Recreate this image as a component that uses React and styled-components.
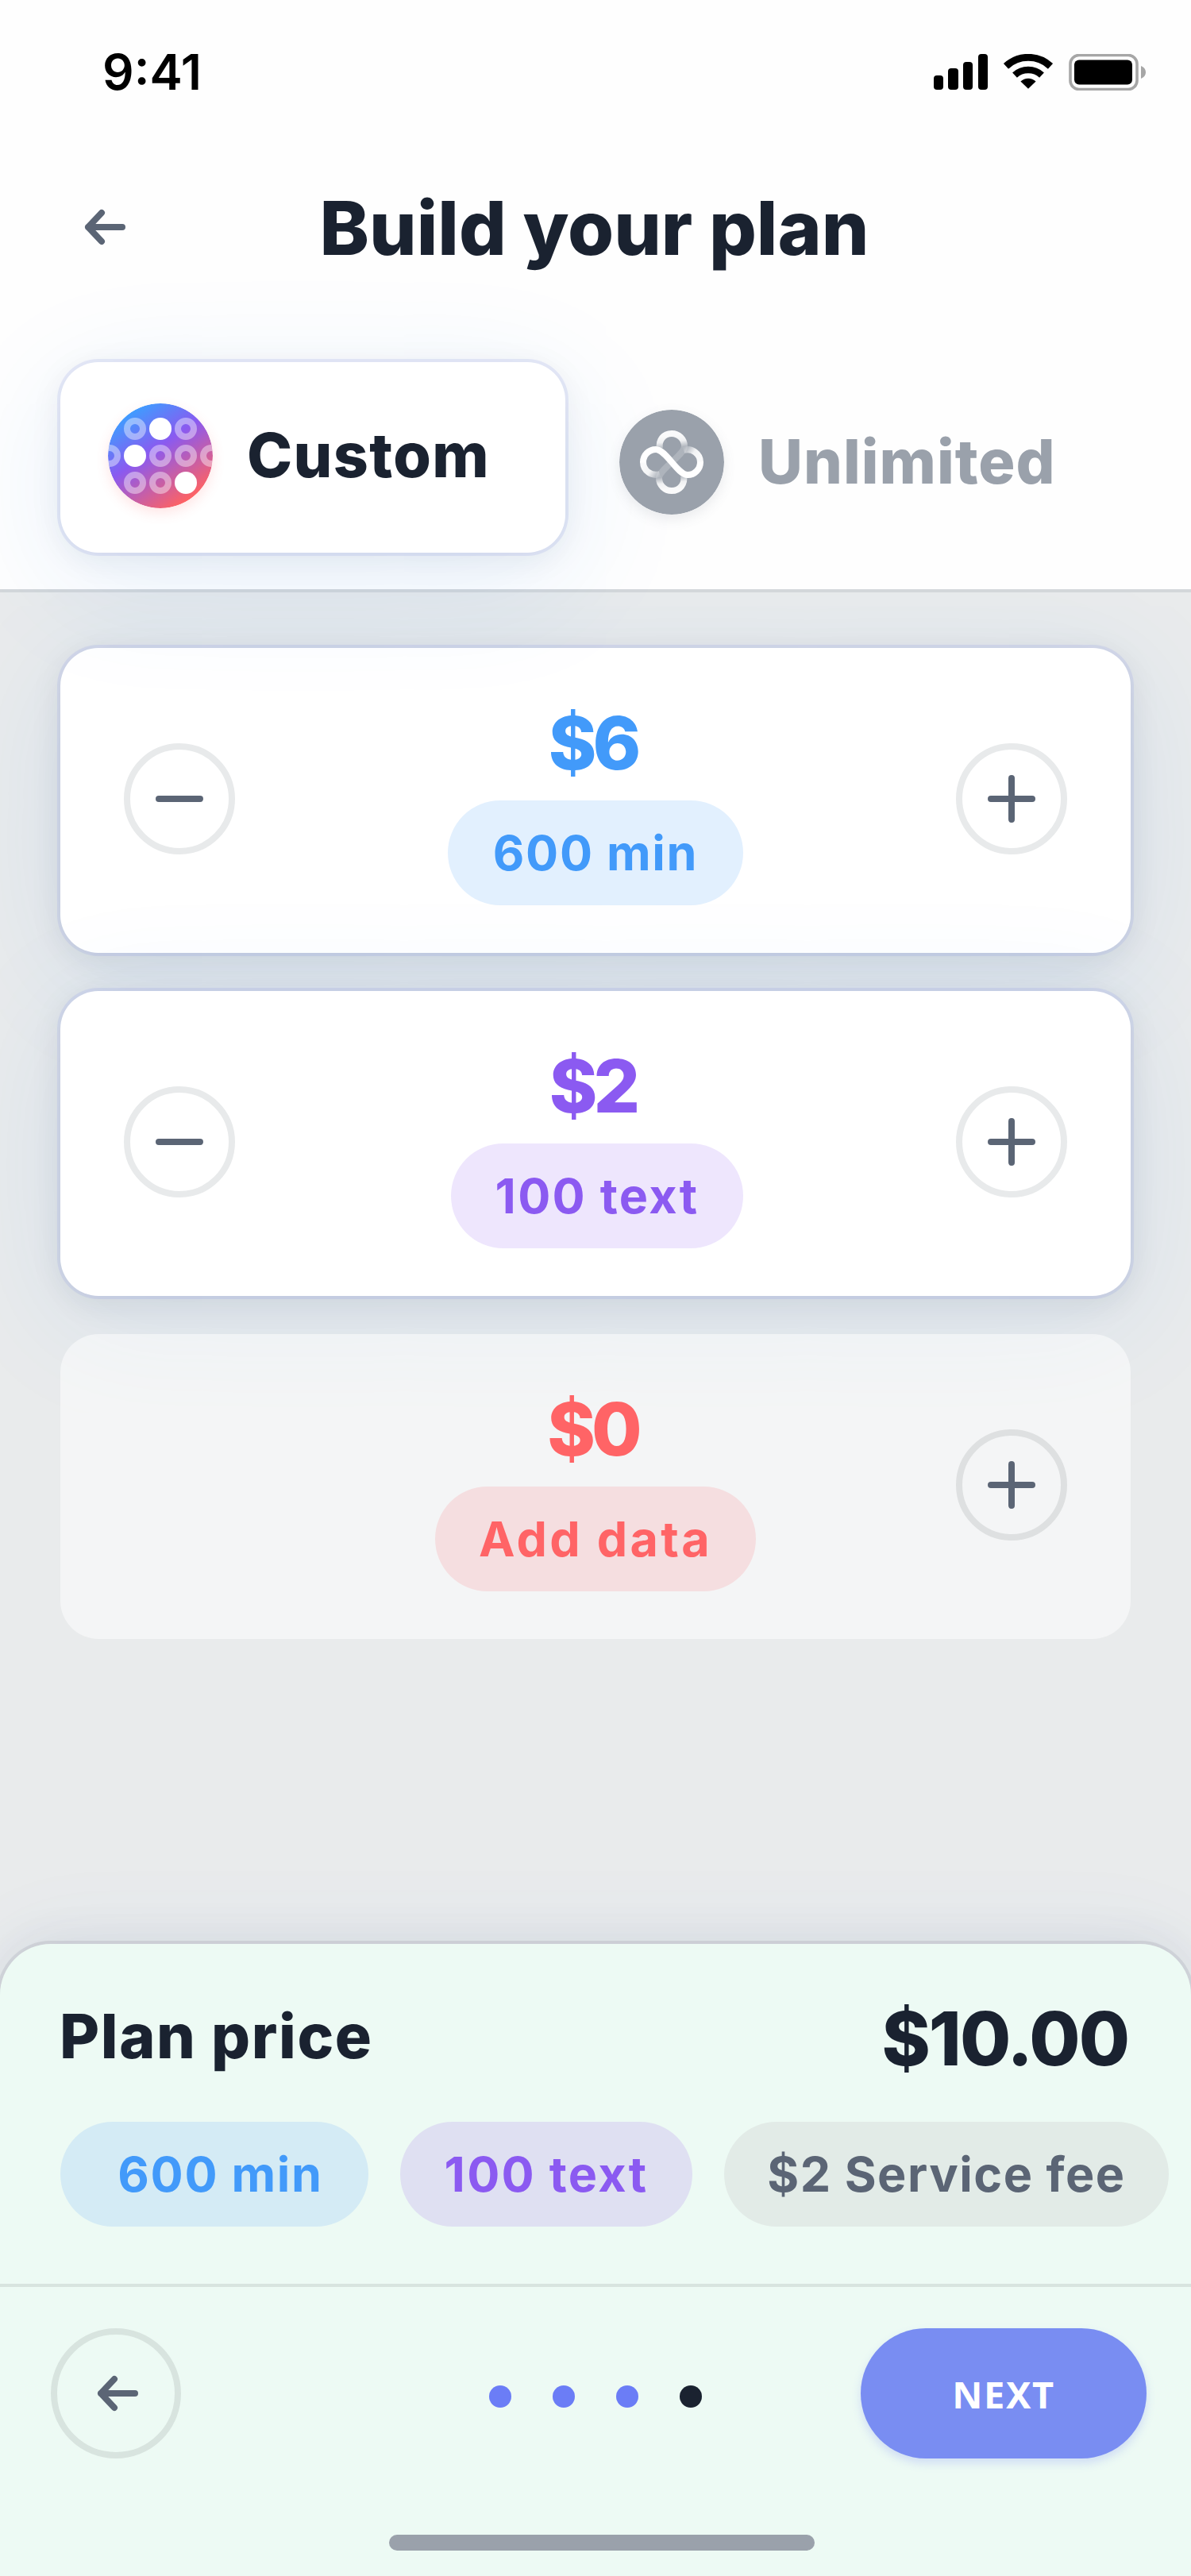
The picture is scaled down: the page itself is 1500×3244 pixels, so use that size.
import React from "react";
import styled, { createGlobalStyle } from "styled-components";

const GlobalStyle = createGlobalStyle`
  * { box-sizing: border-box; }
  html, body { margin: 0; padding: 0; background: #e9ebec; }
  button { font: inherit; color: inherit; border: 0; background: none; padding: 0; margin: 0; }
`;

const ink = "#1a2230";
const slate = "#5b6575";
const display = `Inter, "Liberation Sans", sans-serif`;

const Screen = styled.div`
  display: flex;
  flex-direction: column;
  width: 1500px;
  height: 3244px;
  overflow: hidden;
  background: #e9ebec;
  font-family: ${display};
  color: ${ink};
`;

const Header = styled.header`
  position: relative;
  z-index: 1;
  height: 746px;
  background: #fefefe;
  border-bottom: 4px solid #d3d7da;
`;

const StatusBar = styled.div`
  display: flex;
  align-items: center;
  justify-content: space-between;
  height: 180px;
  padding: 2px 56px 0 129px;
`;

const Clock = styled.span`
  font-weight: 600;
  font-size: 62px;
  line-height: 72px;
  color: #000;
`;

const TitleBar = styled.div`
  display: grid;
  grid-template-columns: 132px 1fr 132px;
  align-items: center;
  height: 212px;
  padding: 0 66px;
`;

const BackLink = styled.button`
  display: flex;
  align-items: center;
  justify-content: center;
  height: 100px;
`;

const Title = styled.h1`
  margin: 2px 0 0;
  padding-right: 3px;
  text-align: center;
  font-weight: 800;
  font-size: 94px;
  line-height: 120px;
`;

const Tabs = styled.div`
  display: flex;
  align-items: flex-start;
  gap: 8px;
  padding: 64px 76px 0;
`;

const Tab = styled.button`
  display: flex;
  align-items: center;
  gap: 43px;
  height: 240px;
  width: ${(p) => (p.$active ? 636 : 640)}px;
  padding: ${(p) => (p.$active ? "0 0 4px 60px" : "12px 0 0 60px")};
  border-radius: 48px;
  color: ${(p) => (p.$active ? ink : "#9aa1ab")};
  background: ${(p) => (p.$active ? "#fff" : "transparent")};
  box-shadow: ${(p) =>
    p.$active
      ? `0 0 0 4px rgba(110, 125, 220, 0.14),
         0 8px 40px rgba(26, 34, 48, 0.08),
         0 36px 160px rgba(40, 130, 240, 0.11)`
      : "none"};
`;

const TabLabel = styled.span`
  margin-top: -3px;
  font-weight: 800;
  font-size: 77px;
  line-height: 100px;
  letter-spacing: ${(p) => p.$spacing}px;
`;

const TabIcon = styled.svg`
  flex: none;
  width: 132px;
  height: 132px;
  border-radius: 50%;
  box-shadow: 0 6px 16px ${(p) => p.$glow};
`;

const Plans = styled.main`
  flex: 1;
  display: flex;
  flex-direction: column;
  gap: 48px;
  padding: 70px 76px 0;
`;

const PlanCard = styled.section`
  display: grid;
  grid-template-columns: 140px 1fr 140px;
  height: 384px;
  padding: 0 80px;
  border-radius: 48px;
  background: ${(p) => (p.$empty ? "rgba(255,255,255,0.5)" : "#fff")};
  box-shadow: ${(p) =>
    p.$empty
      ? "none"
      : `0 0 0 4px rgba(110, 125, 230, 0.13),
         0 8px 40px rgba(26, 34, 48, 0.09),
         0 28px 160px rgba(40, 130, 240, 0.1)`};
`;

const StepButton = styled.button`
  display: flex;
  align-items: center;
  justify-content: center;
  width: 140px;
  height: 140px;
  margin-top: 120px;
  border: 8px solid ${(p) => (p.$muted ? "#dee0e1" : "#e8eaeb")};
  border-radius: 50%;
  color: ${slate};
`;

const PlanBody = styled.div`
  display: flex;
  flex-direction: column;
  align-items: center;
  padding-top: 60px;
`;

const Amount = styled.div`
  height: 132px;
  padding-right: 7px;
  font-weight: 800;
  font-size: 92px;
  line-height: 119px;
  letter-spacing: -5px;
  color: ${(p) => p.$color};
`;

const Chip = styled.span`
  flex: none;
  display: flex;
  justify-content: center;
  width: ${(p) => p.$width}px;
  height: 132px;
  margin-left: ${(p) => p.$nudge || 0}px;
  padding-left: ${(p) => p.$indent || 0}px;
  border-radius: 66px;
  background: ${(p) => p.$fill};
  color: ${(p) => p.$color};
  font-weight: 700;
  font-size: 61px;
  line-height: 132px;
  letter-spacing: ${(p) => p.$spacing}px;
  white-space: nowrap;
`;

const Sheet = styled.footer`
  position: relative;
  height: 796px;
  background: #edfaf4;
  border-radius: 64px 64px 0 0;
  box-shadow: 0 0 0 4px rgba(40, 48, 70, 0.09), 0 -4px 56px rgba(30, 45, 80, 0.07),
    0 -8px 120px rgba(60, 120, 220, 0.05);
`;

const PriceRow = styled.div`
  display: flex;
  justify-content: space-between;
  height: 224px;
  padding: 60px 79px 0 75px;
`;

const PriceLabel = styled.span`
  font-weight: 800;
  font-size: 77px;
  line-height: 113px;
  letter-spacing: 1.6px;
`;

const PriceTotal = styled.span`
  font-weight: 800;
  font-size: 93px;
  line-height: 119px;
  letter-spacing: -2px;
`;

const ChipRow = styled.div`
  display: flex;
  gap: 40px;
  height: 204px;
  padding-left: 76px;
`;

const NavRow = styled.nav`
  display: flex;
  align-items: flex-start;
  justify-content: space-between;
  height: 316px;
  padding: 52px 56px 0 64px;
  border-top: 4px solid #d8e4df;
`;

const RoundBack = styled.button`
  display: flex;
  align-items: center;
  justify-content: center;
  width: 164px;
  height: 164px;
  border: 8px solid #d8e4df;
  border-radius: 50%;
  padding-left: 4px;
`;

const Dots = styled.div`
  display: flex;
  gap: 52px;
  padding: 72px 0 0 188px;
`;

const Dot = styled.i`
  width: 28px;
  height: 28px;
  border-radius: 50%;
  background: ${(p) => (p.$current ? ink : "#6b7df6")};
`;

const NextButton = styled.button`
  width: 360px;
  height: 164px;
  padding-top: 2px;
  border-radius: 82px;
  background: #798df2;
  box-shadow: 0 6px 12px rgba(107, 125, 246, 0.22);
  color: #fff;
  font: 700 47px/162px "Noto Sans", "Open Sans", sans-serif;
  letter-spacing: 1.6px;
`;

const HomeBar = styled.div`
  width: 536px;
  height: 20px;
  margin: 0 0 0 490px;
  border-radius: 10px;
  background: #9aa1ab;
`;

function StatusIcons() {
  return (
    <svg width="268" height="46" viewBox="0 0 268 46">
      <rect x="0" y="27" width="12" height="18" rx="4" />
      <rect x="18" y="18" width="13" height="27" rx="4" />
      <rect x="37" y="10" width="12" height="35" rx="4" />
      <rect x="56" y="0" width="12" height="45" rx="4" />
      <g transform="translate(119 45)">
        <path d="M0 -1.2 L-9.6 -10.4 A14 14 0 0 1 9.6 -10.4 Z" />
        <path d="M-17 -18.4 A25.2 25.2 0 0 1 17 -18.4" fill="none" stroke="#000" strokeWidth="8.6" />
        <path d="M-28 -29.6 A41 41 0 0 1 28 -29.6" fill="none" stroke="#000" strokeWidth="9" />
      </g>
      <rect x="172" y="1.5" width="84" height="43" rx="11" fill="none" stroke="#a6a6a6" strokeWidth="3.6" />
      <rect x="177" y="7.5" width="73" height="31" rx="6" />
      <path d="M261 15 C269 18 269 28 261 31 Z" fill="#a6a6a6" />
    </svg>
  );
}

function ArrowLeft() {
  return (
    <svg width="54" height="48" viewBox="0 0 54 48" fill="none" stroke={slate} strokeWidth="8" strokeLinecap="round" strokeLinejoin="round">
      <path d="M49 24 H6 M23 6 L6 24 L23 42" />
    </svg>
  );
}

function StepGlyph({ plus }) {
  return (
    <svg width="60" height="60" viewBox="0 0 60 60" fill="none" stroke="currentColor" strokeWidth="8" strokeLinecap="round">
      <path d={plus ? "M4 30 H56 M30 4 V56" : "M4 30 H56"} />
    </svg>
  );
}

const rings = [
  [34, 32], [98, 32],
  [2, 66], [66, 66], [98, 66], [130, 66],
  [34, 100], [66, 100],
];
const solids = [[66, 32], [34, 66], [98, 100]];

function CustomIcon() {
  return (
    <TabIcon viewBox="0 0 132 132" $glow="rgba(255, 96, 96, 0.16)">
      <defs>
        <linearGradient id="spectrum" gradientUnits="userSpaceOnUse" x1="29" y1="11" x2="103" y2="121">
          <stop offset="0" stopColor="#3f9cff" />
          <stop offset="0.42" stopColor="#8a5af0" />
          <stop offset="1" stopColor="#ff6262" />
        </linearGradient>
        <clipPath id="disc"><circle cx="66" cy="66" r="66" /></clipPath>
      </defs>
      <g clipPath="url(#disc)">
        <rect width="132" height="132" fill="url(#spectrum)" />
        {rings.map(([x, y]) => (
          <circle key={`${x}-${y}`} cx={x} cy={y} r="10" fill="none" stroke="#fff" strokeOpacity="0.42" strokeWidth="8" />
        ))}
        {solids.map(([x, y]) => (
          <circle key={`${x}-${y}`} cx={x} cy={y} r="14" fill="#fff" />
        ))}
      </g>
    </TabIcon>
  );
}

function UnlimitedIcon() {
  return (
    <TabIcon viewBox="0 0 132 132" $glow="rgba(90, 101, 117, 0.12)">
      <defs>
        <linearGradient id="upright" gradientUnits="userSpaceOnUse" x1="62" y1="26" x2="70" y2="106">
          <stop offset="0.08" stopColor="#fff" stopOpacity="0.95" />
          <stop offset="0.18" stopColor="#fff" stopOpacity="0.85" />
          <stop offset="0.28" stopColor="#fff" stopOpacity="0.2" />
          <stop offset="0.72" stopColor="#fff" stopOpacity="0.2" />
          <stop offset="0.82" stopColor="#fff" stopOpacity="0.85" />
          <stop offset="0.92" stopColor="#fff" stopOpacity="0.95" />
        </linearGradient>
        <linearGradient id="leftTail" gradientUnits="userSpaceOnUse" x1="32" y1="68" x2="52" y2="82">
          <stop offset="0" stopColor="#fff" stopOpacity="0.95" />
          <stop offset="0.45" stopColor="#fff" stopOpacity="0.88" />
          <stop offset="1" stopColor="#fff" stopOpacity="0.08" />
        </linearGradient>
        <linearGradient id="rightTail" gradientUnits="userSpaceOnUse" x1="100" y1="64" x2="80" y2="50">
          <stop offset="0" stopColor="#fff" stopOpacity="0.95" />
          <stop offset="0.45" stopColor="#fff" stopOpacity="0.88" />
          <stop offset="1" stopColor="#fff" stopOpacity="0.08" />
        </linearGradient>
      </defs>
      <circle cx="66" cy="66" r="66" fill="#9aa1ab" />
      <g fill="none" strokeWidth="8">
        <path d="M51 49 C49 38 56 30 66 30 A16 16 0 0 1 82 46 C82 57 50 75 50 86 A16 16 0 0 0 66 102 C76 102 83 94 81 83" stroke="url(#upright)" />
        <path d="M30 66 A16 16 0 0 0 51 81" stroke="url(#leftTail)" />
        <path d="M102 66 A16 16 0 0 0 81 51" stroke="url(#rightTail)" />
        <path d="M30 66.5 V66 A16 16 0 0 1 46 50 C59 50 73 82 86 82 A16 16 0 0 0 102 66 V65.5" stroke="#fff" />
      </g>
    </TabIcon>
  );
}

const blue = { color: "#429afa", soft: "#e2f0fe", tint: "#d4ebf5" };
const purple = { color: "#8b5af1", soft: "#eee6fd", tint: "#dfe0f2" };
const red = { color: "#ff6466", soft: "#f5dee0" };

const plans = [
  { amount: "$6", label: "600 min", width: 372, spacing: 1.7, tone: blue },
  { amount: "$2", label: "100 text", width: 368, spacing: 2.3, nudge: 4, tone: purple },
  { amount: "$0", label: "Add data", width: 404, spacing: 3.3, tone: red, empty: true },
];

export default function App() {
  return (
    <Screen>
      <GlobalStyle />
      <Header>
        <StatusBar>
          <Clock>9:41</Clock>
          <StatusIcons />
        </StatusBar>
        <TitleBar>
          <BackLink aria-label="Back"><ArrowLeft /></BackLink>
          <Title>Build your plan</Title>
        </TitleBar>
        <Tabs>
          <Tab $active>
            <CustomIcon />
            <TabLabel $spacing={1.3}>Custom</TabLabel>
          </Tab>
          <Tab>
            <UnlimitedIcon />
            <TabLabel $spacing={1}>Unlimited</TabLabel>
          </Tab>
        </Tabs>
      </Header>

      <Plans>
        {plans.map((p) => (
          <PlanCard key={p.label} $empty={p.empty}>
            {p.empty ? <span /> : <StepButton aria-label="Less"><StepGlyph /></StepButton>}
            <PlanBody>
              <Amount $color={p.tone.color}>{p.amount}</Amount>
              <Chip $width={p.width} $nudge={p.nudge} $spacing={p.spacing} $fill={p.tone.soft} $color={p.tone.color}>
                {p.label}
              </Chip>
            </PlanBody>
            <StepButton aria-label="More" $muted={p.empty}><StepGlyph plus /></StepButton>
          </PlanCard>
        ))}
      </Plans>

      <Sheet>
        <PriceRow>
          <PriceLabel>Plan price</PriceLabel>
          <PriceTotal>$10.00</PriceTotal>
        </PriceRow>
        <ChipRow>
          <Chip $width={388} $spacing={1.7} $indent={15} $fill={blue.tint} $color={blue.color}>600 min</Chip>
          <Chip $width={368} $spacing={2.3} $fill={purple.tint} $color={purple.color}>100 text</Chip>
          <Chip $width={560} $spacing={1.5} $fill="#e2ebe7" $color={slate}>$2 Service fee</Chip>
        </ChipRow>
        <NavRow>
          <RoundBack aria-label="Back"><ArrowLeft /></RoundBack>
          <Dots>
            <Dot /><Dot /><Dot /><Dot $current />
          </Dots>
          <NextButton>NEXT</NextButton>
        </NavRow>
        <HomeBar />
      </Sheet>
    </Screen>
  );
}
